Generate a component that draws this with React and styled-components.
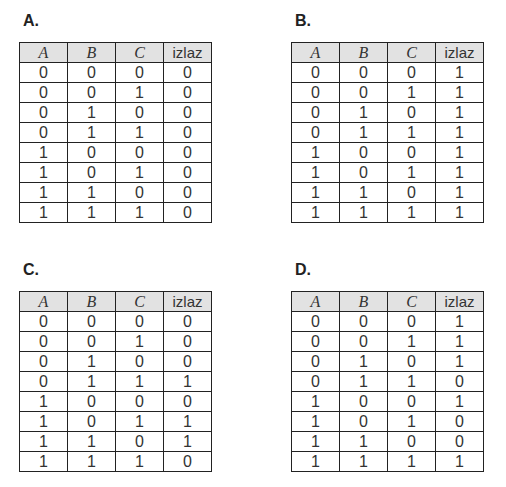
import React from "react";
import styled, { createGlobalStyle } from "styled-components";

const GlobalStyle = createGlobalStyle`
  body {
    margin: 0;
    background: #ffffff;
    font-family: "Liberation Sans", Arial, sans-serif;
  }
`;

const inputs = [
  [0, 0, 0],
  [0, 0, 1],
  [0, 1, 0],
  [0, 1, 1],
  [1, 0, 0],
  [1, 0, 1],
  [1, 1, 0],
  [1, 1, 1],
];

const options = [
  { label: "A.", out: [0, 0, 0, 0, 0, 0, 0, 0] },
  { label: "B.", out: [1, 1, 1, 1, 1, 1, 1, 1] },
  { label: "C.", out: [0, 0, 0, 1, 0, 1, 1, 0] },
  { label: "D.", out: [1, 1, 1, 0, 1, 0, 0, 1] },
];

const TruthTable = ({ label, out }) => (
  <Panel>
    <Label>{label}</Label>
    <Table>
      <HeadCell italic>A</HeadCell>
      <HeadCell italic>B</HeadCell>
      <HeadCell italic>C</HeadCell>
      <HeadCell>izlaz</HeadCell>
      {inputs.map((row, i) => (
        <React.Fragment key={i}>
          {row.map((v, j) => (
            <Cell key={j}>{v}</Cell>
          ))}
          <Cell>{out[i]}</Cell>
        </React.Fragment>
      ))}
    </Table>
  </Panel>
);

const App = () => {
  return (
    <>
      <GlobalStyle />
      <Page>
        {options.map((o) => (
          <TruthTable key={o.label} {...o} />
        ))}
      </Page>
    </>
  );
};

export default App;

const Page = styled.div`
  display: grid;
  grid-template-columns: 272px 1fr;
  row-gap: 37px;
  padding: 11px 0 0 19px;
`;

const Panel = styled.div`
  display: flex;
  flex-direction: column;
`;

const Label = styled.div`
  font-size: 16px;
  font-weight: bold;
  line-height: 19px;
  color: #222;
  padding-left: 4px;
  margin-bottom: 12px;
`;

const Table = styled.div`
  display: grid;
  grid-template-columns: repeat(4, 47px);
  grid-auto-rows: 19px;
  gap: 1px;
  width: max-content;
  background: #222;
  border: 1px solid #222;
`;

const Cell = styled.div`
  display: flex;
  align-items: center;
  justify-content: center;
  background: #ffffff;
  color: #333;
  font-size: 16px;
  line-height: 1;
`;

const HeadCell = styled(Cell)`
  background: #e2e2e2;
  color: #333;
  font-size: ${(p) => (p.italic ? "16px" : "15px")};
  font-family: ${(p) =>
    p.italic ? '"Liberation Serif", "Times New Roman", serif' : '"Liberation Sans", Arial, sans-serif'};
  font-style: ${(p) => (p.italic ? "italic" : "normal")};
`;
